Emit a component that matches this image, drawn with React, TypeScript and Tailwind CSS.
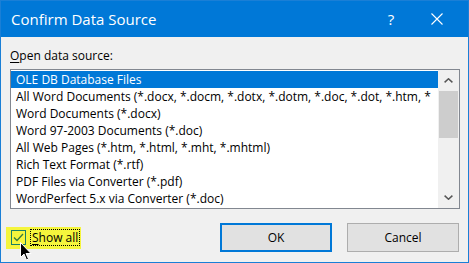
import React from "react";

const items = [
  "OLE DB Database Files",
  "All Word Documents (*.docx, *.docm, *.dotx, *.dotm, *.doc, *.dot, *.htm, *",
  "Word Documents (*.docx)",
  "Word 97-2003 Documents (*.doc)",
  "All Web Pages (*.htm, *.html, *.mht, *.mhtml)",
  "Rich Text Format (*.rtf)",
  "PDF Files via Converter (*.pdf)",
  "WordPerfect 5.x via Converter (*.doc)",
];

export default function App() {
  const [selected, setSelected] = React.useState(0);
  const [showAll, setShowAll] = React.useState(true);

  return (
    <div
      className="w-[469px] h-[263px] bg-[#f0f0f0] border border-[#1a7fd6] flex flex-col text-[12px] text-black overflow-hidden"
      style={{ fontFamily: '"Open Sans", "Noto Sans", sans-serif' }}
    >
      {/* Title bar */}
      <div className="h-[36px] bg-[#0078d7] flex items-center text-white shrink-0">
        <div className="pl-[10px] flex-1 text-[15px]">Confirm Data Source</div>
        <button className="w-[46px] h-full flex items-center justify-center text-[15px]">?</button>
        <button className="w-[46px] h-full flex items-center justify-center mr-[8px]">
          <svg width="12" height="12" viewBox="0 0 12 12" stroke="white" strokeWidth="1.1">
            <path d="M0.5 0.5 L11.5 11.5 M11.5 0.5 L0.5 11.5" />
          </svg>
        </button>
      </div>

      {/* Body */}
      <div className="flex-1 flex flex-col px-[9px]">
        <div className="mt-[9px] h-[19px] leading-[19px]">
          <span className="underline underline-offset-2">O</span>pen data source:
        </div>

        <div className="mt-[4px] h-[140px] w-[450px] border border-[#828790] bg-white flex">
          <div className="flex-1 pt-px overflow-hidden">
            {items.map((t, i) => (
              <div
                key={t}
                onClick={() => setSelected(i)}
                className={`h-[17px] leading-[17px] pl-[5px] whitespace-nowrap ${
                  i === selected ? "bg-[#0078d7] text-white" : ""
                }`}
              >
                {t}
              </div>
            ))}
          </div>
          {/* Scrollbar */}
          <div className="w-[21px] bg-[#f0f0f0] flex flex-col items-center">
            <div className="h-[21px] w-full flex items-center justify-center">
              <svg width="9" height="5" viewBox="0 0 9 5" fill="none" stroke="#555" strokeWidth="1.5">
                <path d="M0.6 4.4 L4.5 0.8 L8.4 4.4" />
              </svg>
            </div>
            <div className="w-[19px] h-[47px] bg-[#cdcdcd]" />
            <div className="flex-1" />
            <div className="h-[21px] w-full flex items-center justify-center">
              <svg width="9" height="5" viewBox="0 0 9 5" fill="none" stroke="#555" strokeWidth="1.5">
                <path d="M0.6 0.6 L4.5 4.2 L8.4 0.6" />
              </svg>
            </div>
          </div>
        </div>

        {/* Footer */}
        <div className="mt-[14px] flex items-center">
          <label
            className="relative flex items-center bg-[#f5f53d] h-[22px] pl-[5px] pr-[1px] -ml-[4px] cursor-default"
            onClick={() => setShowAll(!showAll)}
          >
            <span className="w-[15px] h-[15px] border border-[#1a7f64] bg-[#f5f53d] flex items-center justify-center">
              {showAll && (
                <svg width="11" height="9" viewBox="0 0 11 9" fill="none" stroke="#3a7a3a" strokeWidth="1.3">
                  <path d="M1 4.5 L4 7.5 L10 1" />
                </svg>
              )}
            </span>
            <span className="ml-[4px] px-[1px] border border-dotted border-black h-[17px] leading-[15px]">
              <span className="underline underline-offset-2">S</span>how all
            </span>
            <svg
              className="absolute left-[14px] top-[15px]"
              width="12"
              height="19"
              viewBox="0 0 12 19"
            >
              <path
                d="M0.5 0.5 L0.5 15.5 L4 12 L6.5 18 L8.5 17 L6 11.5 L11 11.5 Z"
                fill="black"
                stroke="white"
                strokeWidth="1"
              />
            </svg>
          </label>
          <div className="flex-1" />
          <button className="w-[112px] h-[29px] bg-[#e1e1e1] border-2 border-[#0078d7] mr-[15px]">OK</button>
          <button className="w-[112px] h-[29px] bg-[#e1e1e1] border border-[#adadad]">Cancel</button>
        </div>
      </div>
    </div>
  );
}
